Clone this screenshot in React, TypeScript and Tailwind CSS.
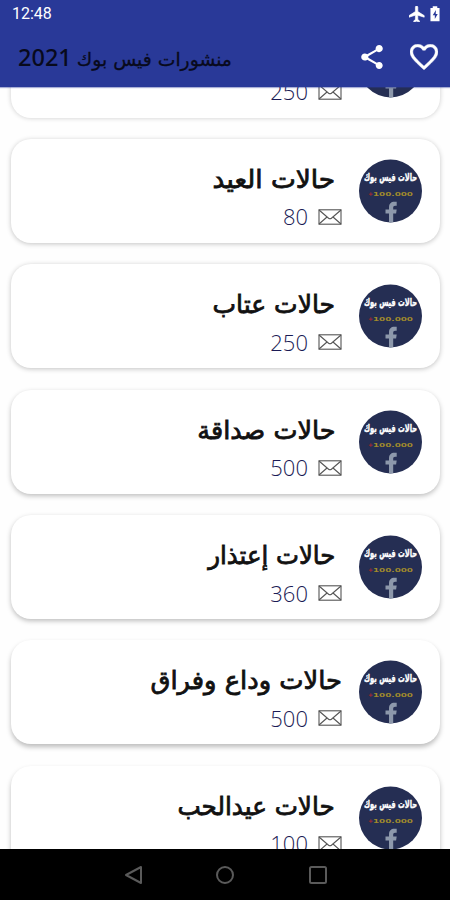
import { type FC } from 'react';

interface Category {
  title: string;
  count: number;
  titleClass: string;
  shadow: string;
}

const categories: Category[] = [
  { title: 'حالات حب', count: 250, titleClass: 'mr-[7px]', shadow: 'shadow-[0_0_5px_rgba(0,0,0,0.2)]' },
  { title: 'حالات العيد', count: 80, titleClass: 'mr-[7px] scale-x-[1.055]', shadow: 'shadow-[0_1px_5px_rgba(0,0,0,0.23)]' },
  { title: 'حالات عتاب', count: 250, titleClass: 'mr-[7px]', shadow: 'shadow-[0_1px_5px_rgba(0,0,0,0.24)]' },
  { title: 'حالات صداقة', count: 500, titleClass: 'mr-[7px] scale-x-[1.02]', shadow: 'shadow-[0_2px_5px_rgba(0,0,0,0.25)]' },
  { title: 'حالات إعتذار', count: 360, titleClass: 'mr-[7px] scale-x-[0.975]', shadow: 'shadow-[0_2px_5px_rgba(0,0,0,0.26)]' },
  { title: 'حالات وداع وفراق', count: 500, titleClass: 'scale-x-[1.03]', shadow: 'shadow-[0_3px_5px_rgba(0,0,0,0.26)]' },
  { title: 'حالات عيدالحب', count: 100, titleClass: 'mr-[7px] scale-x-[0.985]', shadow: 'shadow-[0_3px_5px_rgba(0,0,0,0.26)]' },
];

const Badge: FC = () => (
  <svg viewBox="0 0 64 64" className="h-16 w-16 shrink-0">
    <defs>
      <clipPath id="disc">
        <circle cx="31.5" cy="32" r="31.5" />
      </clipPath>
    </defs>
    <g clipPath="url(#disc)">
      <rect width="64" height="64" fill="#252e53" />
      <text
        x="31.5"
        y="22"
        textAnchor="middle"
        textLength="53"
        lengthAdjust="spacingAndGlyphs"
        direction="rtl"
        fontFamily="DejaVu Sans, sans-serif"
        fontWeight="700"
        fontSize="11"
        fill="#fff"
        stroke="#fff"
        strokeWidth="0.4"
      >
        حالات فيس بوك
      </text>
      <text x="9" y="37" fontFamily="DejaVu Sans, sans-serif" fontWeight="700" fontSize="6" fill="#b0282c">+</text>
      <text
        x="14"
        y="37"
        textLength="40"
        lengthAdjust="spacingAndGlyphs"
        fontFamily="DejaVu Sans, sans-serif"
        fontWeight="700"
        fontSize="5.5"
        fill="#a08a2c"
      >
        100.000
      </text>
      <path d="M30 64V54.5h-3.5v-4H30v-2.2c0-3.600 2.200-5.500 5.300-5.500h2.400v3.900h-1.500c-1.500 0-2 .8-2 2v1.800h3.500l-.6 4h-2.900V64z" fill="#8d98ab" />
    </g>
  </svg>
);

const Envelope: FC = () => (
  <svg viewBox="0 0 24 16" className="h-4 w-6" fill="none" stroke="#555" strokeWidth="1.1">
    <rect x="1" y="0.8" width="22" height="14.4" />
    <path d="M1 1l9.600 8.200q1.400 1 2.800 0L23 1M1 15l8-7M23 15l-8-7" />
  </svg>
);

const Card: FC<{ item: Category }> = ({ item }) => (
  <div className={`flex h-[104px] shrink-0 justify-end rounded-[20px] bg-white pr-[17px] ${item.shadow}`}>
    <div className="flex flex-col items-end pt-[23px]">
      <h2
        dir="rtl"
        className={`h-9 origin-right text-[25px] leading-9 whitespace-nowrap text-[#111] [-webkit-text-stroke:0.8px_#111] ${item.titleClass}`}
      >
        {item.title}
      </h2>
      <div className="flex h-[38px] items-center gap-2.5">
        <span className="font-['Open_Sans',sans-serif] text-[22px] font-light text-[#1b1b55]">{item.count}</span>
        <Envelope />
      </div>
    </div>
    <div className="ml-[17px] pt-5">
      <Badge />
    </div>
  </div>
);

export default function App() {
  return (
    <div className="flex h-[900px] w-[450px] flex-col overflow-hidden bg-[#fefefe] font-['DejaVu_Sans',sans-serif]">
      <header className="z-10 h-[87px] shrink-0 bg-[#293998] shadow-[0_1px_1px_rgba(41,57,152,0.4)]">
        <div className="flex h-7 items-center justify-between pr-2.5 pl-3">
          <span className="font-[Roboto,sans-serif] text-[16px] text-white">12:48</span>
          <div className="flex items-center gap-[5px]">
            <svg viewBox="2 2 20 20" className="h-4 w-4" fill="#fff" stroke="#fff" strokeWidth="0.8">
              <path d="M21 16v-2l-8-5V3.500a1.500 1.500 0 0 0-3 0V9l-8 5v2l8-2.500V19l-2 1.500V22l3.500-1 3.500 1v-1.500L13 19v-5.500z" />
            </svg>
            <svg viewBox="0 0 11 17" className="h-4 w-2.5">
              <path d="M3 0h5v2h2.500v14.500H.5V2H3z" fill="#fff" />
              <path d="M6.500 4L3 10h2.300v4L8.500 8.500H6.300z" fill="#293998" />
            </svg>
          </div>
        </div>
        <div className="flex h-[58px] items-center justify-between pr-3 pl-[18px]">
          <h1 dir="rtl" className="flex items-baseline gap-[5px] text-[#080a1c]">
            <span className="text-[18.800px] leading-8 [-webkit-text-stroke:0.3px_#080a1c]">منشورات فيس بوك</span>
            <span className="pt-0.5 font-['Noto_Sans',sans-serif] text-[23.500px] leading-8 font-medium">2021</span>
          </h1>
          <div className="flex items-center gap-[27px]">
            <svg viewBox="3 2 18 20" className="h-6 w-[22px]" fill="#fff">
              <path d="M18 16.080c-.76 0-1.440.3-1.960.77L8.910 12.700c.05-.23.090-.46.090-.7s-.04-.47-.090-.7l7.050-4.110c.54.5 1.250.81 2.040.81 1.660 0 3-1.340 3-3s-1.340-3-3-3-3 1.340-3 3c0 .24.04.47.090.7L8.040 9.810C7.500 9.310 6.790 9 6 9c-1.660 0-3 1.340-3 3s1.340 3 3 3c.79 0 1.500-.31 2.040-.81l7.120 4.160c-.05.21-.08.43-.08.65 0 1.610 1.310 2.920 2.920 2.920s2.920-1.310 2.920-2.920-1.310-2.920-2.920-2.920z" />
            </svg>
            <svg viewBox="2 3 20 18.350" className="h-[26px] w-7" fill="#fff" stroke="#fff" strokeWidth="0.3">
              <path d="M16.500 3c-1.740 0-3.410.81-4.500 2.090C10.910 3.810 9.240 3 7.500 3 4.420 3 2 5.420 2 8.500c0 3.780 3.400 6.860 8.550 11.540L12 21.350l1.450-1.320C18.600 15.360 22 12.280 22 8.500 22 5.420 19.580 3 16.500 3zm-4.400 15.550l-.1.100-.1-.1C7.140 14.240 4 11.390 4 8.500 4 6.500 5.500 5 7.500 5c1.540 0 3.040.99 3.570 2.360h1.870C13.460 5.990 14.960 5 16.500 5c2 0 3.500 1.500 3.500 3.500 0 2.890-3.140 5.740-7.900 10.050z" />
            </svg>
          </div>
        </div>
      </header>

      <main className="flex-1 overflow-hidden">
        <div className="-mt-[73.500px] flex flex-col gap-[21.400px] pr-2.5 pl-[11px]">
          {categories.map((item) => (
            <Card key={item.title} item={item} />
          ))}
        </div>
      </main>

      <nav className="flex h-[51px] shrink-0 items-center justify-center gap-[73px] bg-black">
        <svg viewBox="-2 0 20 20" className="h-5 w-5" fill="none" stroke="#5a5a5a" strokeWidth="2" strokeLinejoin="round">
          <path d="M17 2v16L2 10z" />
        </svg>
        <svg viewBox="0 0 20 20" className="h-5 w-5" fill="none" stroke="#5a5a5a" strokeWidth="2">
          <circle cx="10" cy="10" r="8" />
        </svg>
        <svg viewBox="0 0 20 20" className="h-5 w-5" fill="none" stroke="#5a5a5a" strokeWidth="2">
          <rect x="2" y="2" width="16" height="16" rx="1.500" />
        </svg>
      </nav>
    </div>
  );
}
